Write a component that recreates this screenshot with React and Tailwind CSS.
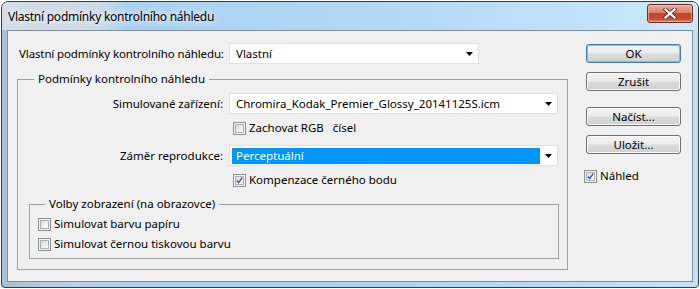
import React from "react";

function Checkbox({ checked }) {
  return (
    <div className="w-[13px] h-[13px] shrink-0 border border-[#8e8f8f] bg-[#f4f4f4] p-[1px]">
      <div className="w-full h-full border border-[#aeb0b2] bg-[linear-gradient(135deg,#d8d9da_0%,#f0f0f0_60%,#fbfbfb_100%)] flex items-center justify-center">
        {checked && (
          <svg width="9" height="9" viewBox="0 0 9 9">
            <path d="M1 4.5 L3.4 7.2 L8 0.8" fill="none" stroke="#3a55a0" strokeWidth="1.8" />
          </svg>
        )}
      </div>
    </div>
  );
}

function Arrow() {
  return (
    <svg width="7" height="4" viewBox="0 0 7 4" className="shrink-0">
      <path d="M0 0 H7 L3.5 4 Z" fill="#000" />
    </svg>
  );
}

function Combo({ text, w }) {
  return (
    <div className={`${w} h-[21px] bg-white border border-[#e1e1e1] flex items-center pl-[6px] pr-[5px]`}>
      <span className="whitespace-nowrap">{text}</span>
      <span className="ml-auto">
        <Arrow />
      </span>
    </div>
  );
}

function Button({ label, primary, mt }) {
  return (
    <div
      className={`${mt} ml-[2px] w-[95px] h-[19px] rounded-[3px] border flex items-center justify-center leading-none bg-[linear-gradient(#f3f3f3_0%,#ebebeb_48%,#dcdcdc_52%,#cfcfcf_100%)] ${
        primary
          ? "border-[#3c7fb1] shadow-[inset_0_0_0_1px_#4fd4f7]"
          : "border-[#707070] shadow-[inset_0_0_0_1px_#fbfbfb]"
      }`}
    >
      {label}
    </div>
  );
}

function CheckRow({ checked, label, className }) {
  return (
    <div className={`flex items-center h-[20px] ${className || ""}`}>
      <Checkbox checked={checked} />
      <span className="ml-[3px] whitespace-pre">{label}</span>
    </div>
  );
}

export default function App() {
  return (
    <div className="w-[700px] h-[289px] bg-white font-['Noto_Sans',sans-serif] text-[11.5px] text-black leading-[16px]">
      <div className="ml-[1px] mt-[1px] w-[698px] h-[287px] rounded-t-[7px] rounded-b-[4px] border border-[#3a3a3a] bg-[linear-gradient(90deg,#a9c0d6_0%,#b9d2e9_10%,#a8d0f0_25%,#aed5f3_60%,#c2e2f9_100%)] flex flex-col overflow-hidden">
        {/* title bar */}
        <div className="h-[28px] shrink-0 flex items-start pl-[6px] pr-[5px] bg-[linear-gradient(90deg,#d3dde7_0%,#cdd9e5_14%,#a9d1f1_18%,#b4d9f6_60%,#cce8fb_100%)]">
          <div className="pt-[7px] whitespace-nowrap text-[12px] tracking-[-0.25px] [text-shadow:0_0_6px_#ffffff,0_0_10px_#ffffff]">
            Vlastní podmínky kontrolního náhledu
          </div>
          <div className="ml-auto mt-[2px] w-[46px] h-[19px] rounded-[3px] border border-[#6e2a20] bg-[linear-gradient(#eab0a3_0%,#dd7d67_45%,#c7432a_50%,#c44a2f_80%,#e2826a_100%)] flex items-center justify-center shadow-[inset_0_0_0_1px_rgba(255,210,200,0.5)]">
            <svg width="14" height="11" viewBox="0 0 14 11">
              <path d="M2.5 1.5 L11.5 9.5 M11.5 1.5 L2.5 9.5" stroke="#5a3a36" strokeWidth="4" strokeLinecap="square" fill="none" />
              <path d="M2.5 1.5 L11.5 9.5 M11.5 1.5 L2.5 9.5" stroke="#ffffff" strokeWidth="2.2" strokeLinecap="square" fill="none" />
            </svg>
          </div>
        </div>

        {/* client area */}
        <div className="mx-[5px] h-[252px] shrink-0 border border-[#7d8e9f] bg-[#f0f0f0] flex pl-[9px]">
          {/* left column */}
          <div className="w-[551px] pt-[12px] flex flex-col">
            <div className="flex items-center h-[21px]">
              <div className="w-[212px] pl-[2px] whitespace-nowrap tracking-[-0.12px]">Vlastní podmínky kontrolního náhledu:</div>
              <Combo text="Vlastní" w="w-[250px]" />
            </div>

            <div className="relative mt-[15px] h-[191px] border border-[#a0a0a0] flex flex-col">
              <span className="absolute left-[16px] -top-[9px] px-[4px] bg-[#f0f0f0] whitespace-nowrap">
                Podmínky kontrolního náhledu
              </span>

              <div className="flex items-center h-[21px] mt-[13px]">
                <div className="w-[211px] pr-[6px] text-right whitespace-nowrap">Simulované zařízení:</div>
                <Combo text="Chromira_Kodak_Premier_Glossy_20141125S.icm" w="w-[329px]" />
              </div>

              <CheckRow className="mt-[4px] ml-[215px]" label="Zachovat RGB   čísel" />

              <div className="flex items-center h-[21px] mt-[7px]">
                <div className="w-[211px] pr-[6px] text-right whitespace-nowrap">Záměr reprodukce:</div>
                <div className="w-[329px] h-[21px] bg-white border border-[#e1e1e1] flex items-center pl-[2px] pr-[5px]">
                  <div className="w-[308px] h-[16px] bg-[#0096ff] border border-dotted border-[#b86a1a] flex items-center pl-[3px] text-white whitespace-nowrap">
                    Perceptuální
                  </div>
                  <span className="ml-auto">
                    <Arrow />
                  </span>
                </div>
              </div>

              <CheckRow className="mt-[4px] ml-[215px]" checked label="Kompenzace černého bodu" />

              <div className="relative mt-[14px] ml-[11px] mr-[8px] h-[55px] border border-[#a0a0a0] flex flex-col pl-[8px] pt-[9px]">
                <span className="absolute left-[15px] -top-[9px] px-[4px] bg-[#f0f0f0] whitespace-nowrap">
                  Volby zobrazení (na obrazovce)
                </span>
                <CheckRow label="Simulovat barvu papíru" />
                <CheckRow label="Simulovat černou tiskovou barvu" />
              </div>
            </div>
          </div>

          {/* right column */}
          <div className="ml-[16px] pt-[13px] flex flex-col">
            <Button primary label="OK" mt="mt-0" />
            <Button label="Zrušit" mt="mt-[9px]" />
            <Button label="Načíst..." mt="mt-[16px]" />
            <Button label="Uložit..." mt="mt-[9px]" />
            <CheckRow className="mt-[12px]" checked label="Náhled" />
          </div>
        </div>
      </div>
    </div>
  );
}
